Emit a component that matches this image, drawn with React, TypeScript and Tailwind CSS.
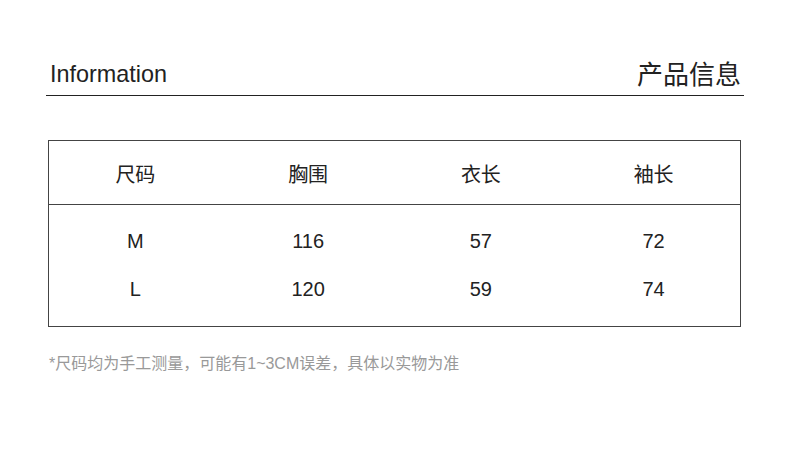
import React from "react";

const font = { fontFamily: '"Liberation Sans", "Noto Sans CJK SC", sans-serif' };

const headers = ["尺码", "胸围", "衣长", "袖长"];
const rows = [
  ["M", "116", "57", "72"],
  ["L", "120", "59", "74"],
];

export default function App() {
  return (
    <div className="w-[790px] h-[451px] bg-white text-[#222]" style={font}>
      <div className="pt-[55px] mx-[46px]">
        <div className="h-[41px] flex items-center justify-between border-b border-[#222] pl-[4px] pr-[3px]">
          <span className="text-[23.4px] leading-none">Information</span>
          <span className="text-[26px] leading-none">产品信息</span>
        </div>
      </div>
      <div className="ml-[48px] w-[693px] mt-[44px] border border-[#444]">
        <div className="grid grid-cols-4 h-[64px] pt-[4px] items-center border-b border-[#444]">
          {headers.map((h) => (
            <div key={h} className="text-center text-[20px] leading-none">
              {h}
            </div>
          ))}
        </div>
        <div className="pt-[12px] pb-[13px]">
          {rows.map((r) => (
            <div key={r[0]} className="grid grid-cols-4 h-[48px] items-center">
              {r.map((c, i) => (
                <div key={i} className="text-center text-[20px] leading-none">
                  {c}
                </div>
              ))}
            </div>
          ))}
        </div>
      </div>
      <div className="mt-[29px] ml-[49px] text-[16px] leading-none text-[#999]">
        *尺码均为手工测量，可能有1~3CM误差，具体以实物为准
      </div>
    </div>
  );
}
